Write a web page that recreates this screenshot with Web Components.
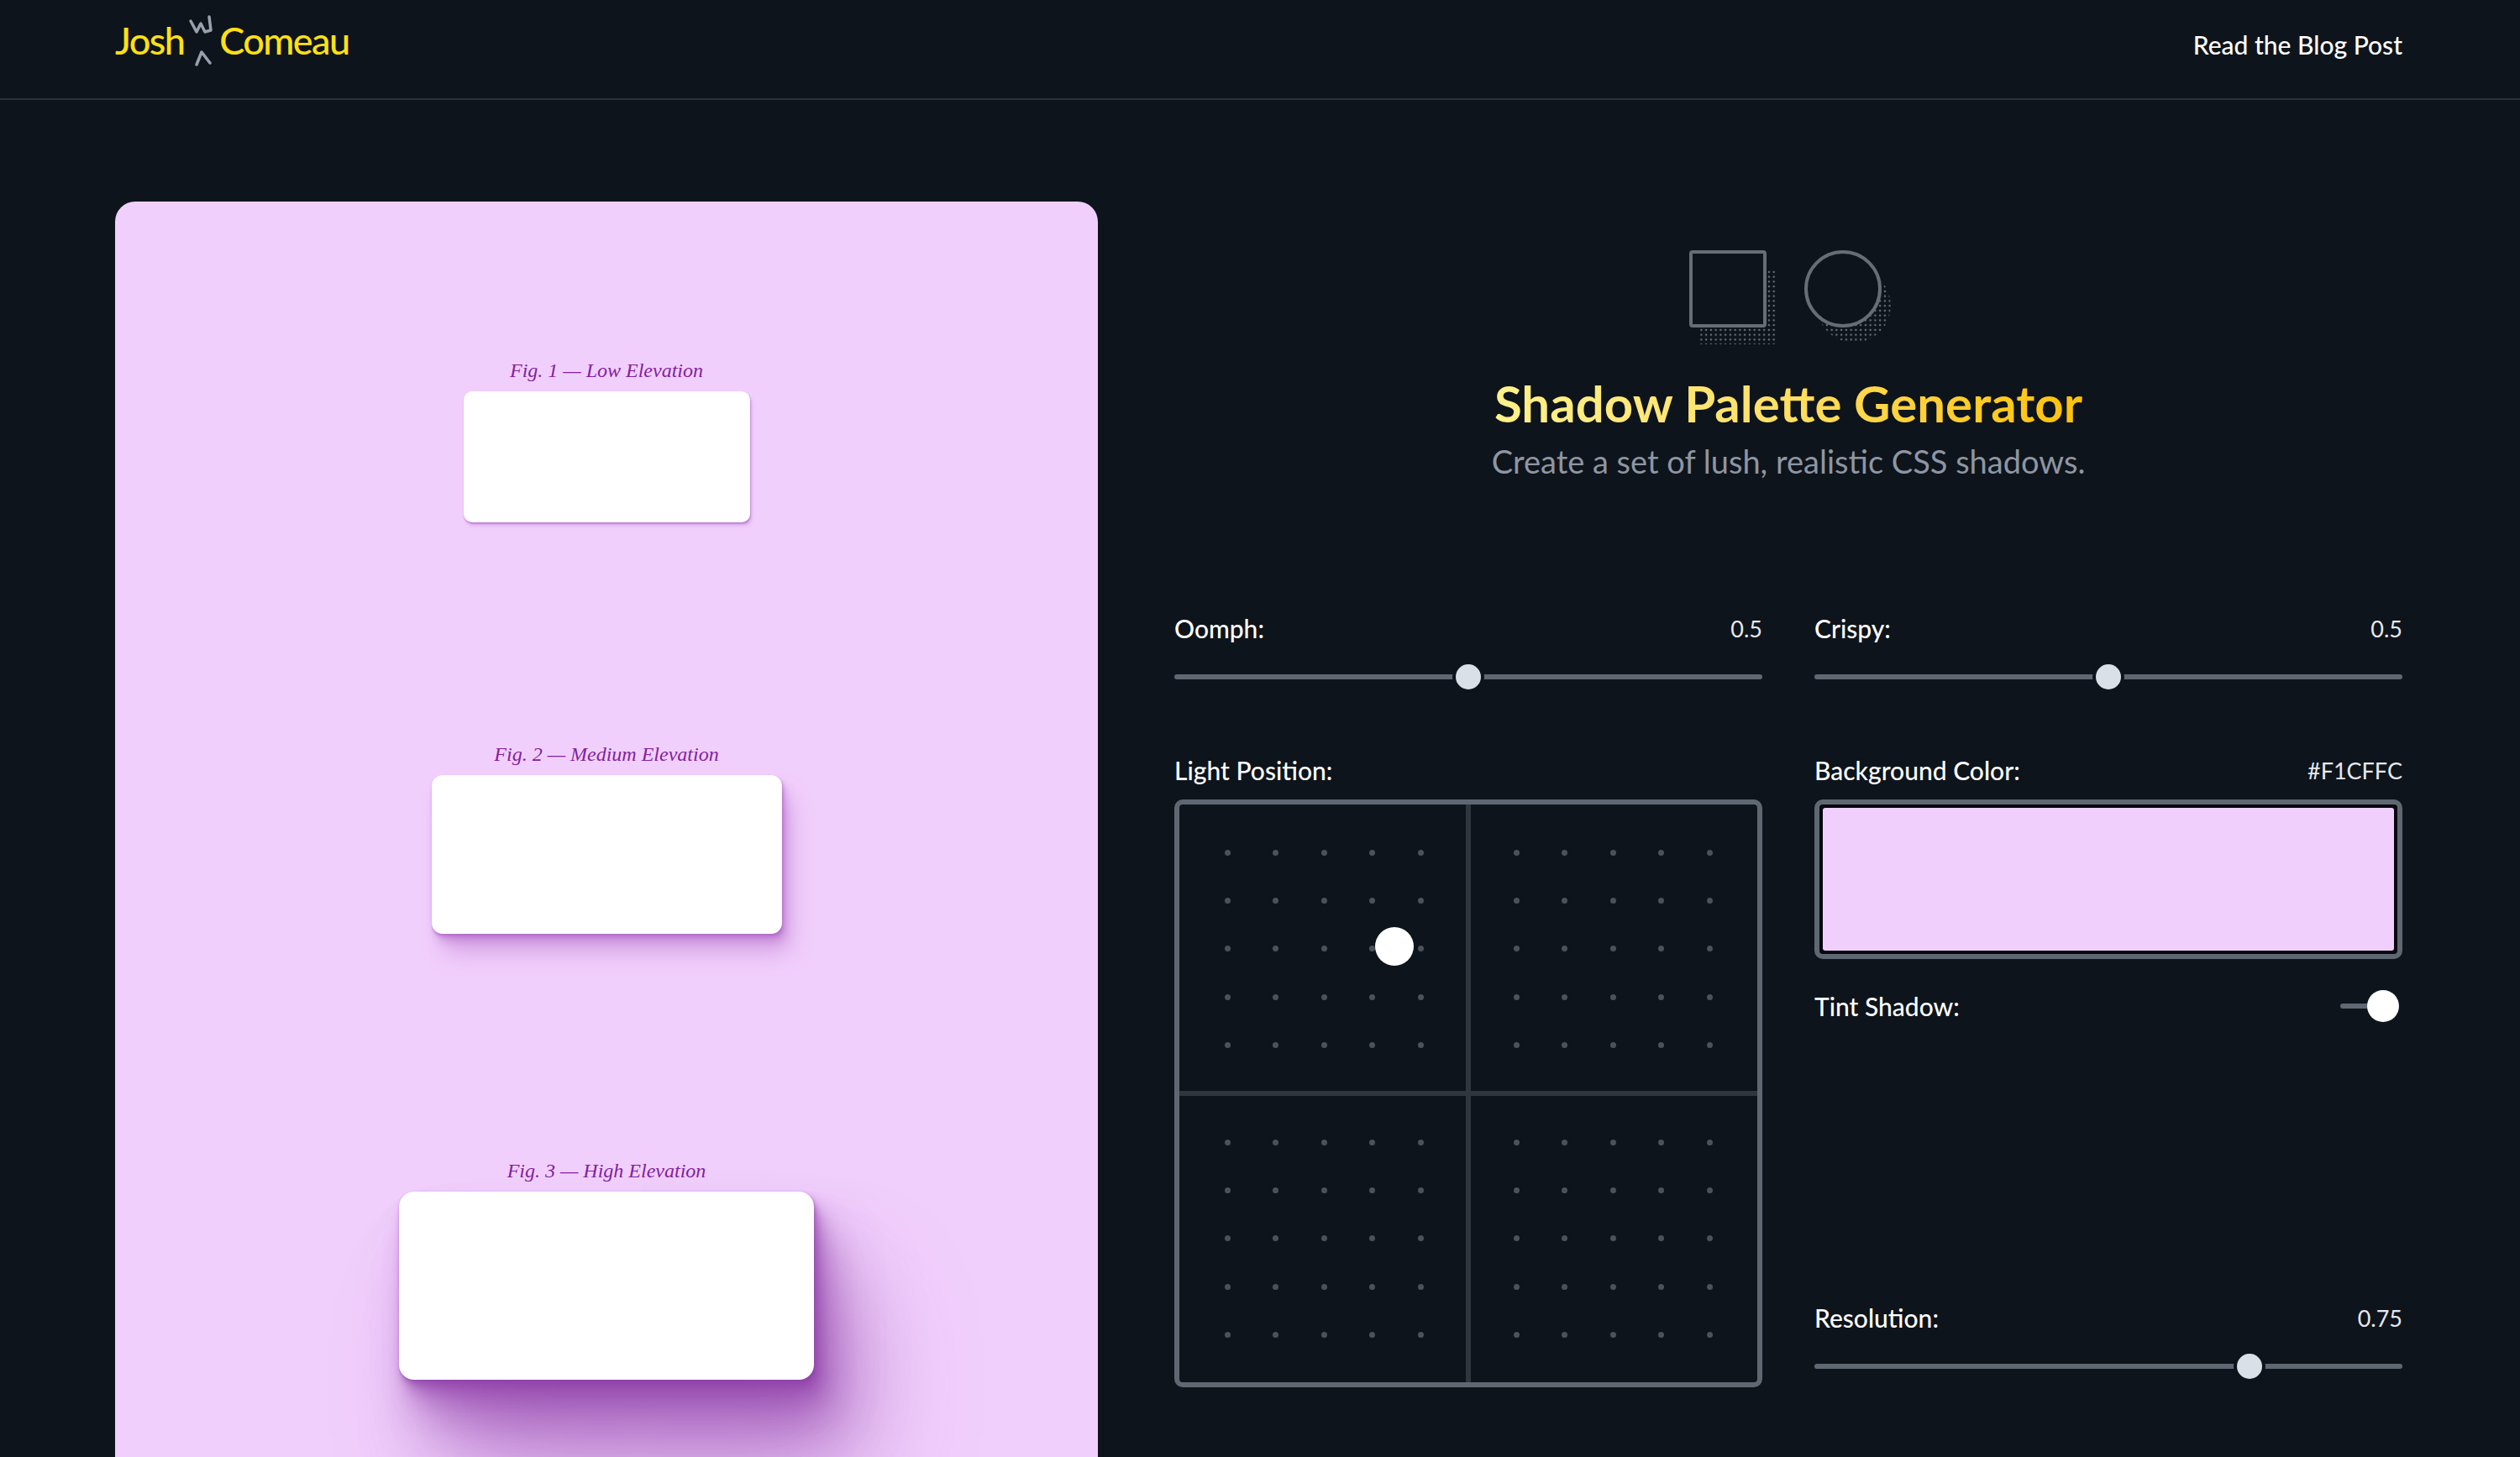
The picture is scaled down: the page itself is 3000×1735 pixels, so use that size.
<!DOCTYPE html>
<html lang="en">
<head>
<meta charset="utf-8">
<title>Shadow Palette Generator</title>
<style>
    html, body{
        margin: 0;
        height: 1735px;
        overflow: hidden;
        background: #0e141b;
        color: #fff;
        font-family: Lato, "Noto Sans", sans-serif;
    }
</style>
</head>
<body>
<site-header></site-header>
<app-main>
    <preview-panel slot="preview">
        <shadow-figure caption="Fig. 1 — Low Elevation" level="low"></shadow-figure>
        <shadow-figure caption="Fig. 2 — Medium Elevation" level="medium"></shadow-figure>
        <shadow-figure caption="Fig. 3 — High Elevation" level="high"></shadow-figure>
    </preview-panel>
    <app-hero slot="hero"></app-hero>
    <control-slider slot="oomph" label="Oomph:" value="0.5"></control-slider>
    <control-slider slot="crispy" label="Crispy:" value="0.5"></control-slider>
    <light-position slot="light"></light-position>
    <color-field slot="color"></color-field>
    <tint-toggle slot="tint"></tint-toggle>
    <control-slider slot="resolution" label="Resolution:" value="0.75"></control-slider>
</app-main>

<script>
class siteHeader extends HTMLElement{
    constructor(){
        super()
        this.attachShadow({mode: 'open'}).innerHTML = `
            <style>
                :host{
                    display: flex;
                    justify-content: space-between;
                    align-items: center;
                    box-sizing: border-box;
                    height: 119px;
                    padding: 0 140px 12px 137px;
                    border-bottom: 2px solid #2b3138;
                }
                .logo{
                    display: flex;
                    align-items: center;
                    color: #ffe014;
                    font-size: 45px;
                    font-weight: 500;
                    letter-spacing: -1.6px;
                    margin-top: -10px;
                }
                svg{
                    width: 37px;
                    height: 66px;
                    margin: 0 0 0 5px;
                    fill: none;
                    stroke: #9aa1ac;
                    stroke-width: 3.5;
                    stroke-linejoin: round;
                    stroke-linecap: round;
                }
                a{
                    color: #fff;
                    font-size: 30px;
                    font-weight: 500;
                    text-decoration: none;
                }
            </style>
            <div class="logo">
                <span>Josh</span>
                <svg viewBox="0 0 37 66">
                    <path d="M3 10 L10 23 L15 13 L20 23 L27 21 L25 5"/>
                    <path d="M10 62 L16 47 L26 60"/>
                </svg>
                <span>Comeau</span>
            </div>
            <a href="#">Read the Blog Post</a>
        `
    }
}

class appMain extends HTMLElement{
    constructor(){
        super()
        this.attachShadow({mode: 'open'}).innerHTML = `
            <style>
                :host{
                    display: grid;
                    grid-template-columns: 1170px 1462px;
                    column-gap: 91px;
                    padding: 121px 140px 0 137px;
                }
                .controls{
                    display: grid;
                    grid-template-columns: 700px 700px;
                    column-gap: 62px;
                    row-gap: 75px;
                }
                .side{
                    display: flex;
                    flex-direction: column;
                }
                ::slotted([slot="resolution"]){
                    margin-top: auto;
                    margin-bottom: 7px;
                }
            </style>
            <slot name="preview"></slot>
            <div>
                <slot name="hero"></slot>
                <div class="controls">
                    <slot name="oomph"></slot>
                    <slot name="crispy"></slot>
                    <slot name="light"></slot>
                    <div class="side">
                        <slot name="color"></slot>
                        <slot name="tint"></slot>
                        <slot name="resolution"></slot>
                    </div>
                </div>
            </div>
        `
    }
}

class previewPanel extends HTMLElement{
    constructor(){
        super()
        this.attachShadow({mode: 'open'}).innerHTML = `
            <style>
                :host{
                    display: flex;
                    flex-direction: column;
                    align-items: center;
                    box-sizing: border-box;
                    height: 1700px;
                    padding-top: 184px;
                    background: #f1cffc;
                    border-radius: 24px;
                }
            </style>
            <slot></slot>
        `
    }
}

const FIGURES = {
    low: {
        width: 341, height: 156, radius: 10, bottom: 259,
        shadow: `0.6px 1.2px 1.4px hsl(286deg 45% 55% / 0.34), 1px 2px 2.3px -1.2px hsl(286deg 45% 55% / 0.34), 2.4px 4.8px 5.4px -2.4px hsl(286deg 45% 55% / 0.34)`
    },
    medium: {
        width: 417, height: 189, radius: 13, bottom: 265,
        shadow: `0.6px 1.2px 1.4px hsl(286deg 45% 55% / 0.36), 2px 4px 4.5px -0.8px hsl(286deg 45% 55% / 0.36), 5px 10px 11.3px -1.6px hsl(286deg 45% 55% / 0.36), 12px 24px 27px -2.4px hsl(286deg 45% 55% / 0.36)`
    },
    high: {
        width: 494, height: 224, radius: 18, bottom: 0,
        shadow: `0.9px 1.8px 2.2px hsl(286deg 45% 45% / 0.34), 2.6px 5.2px 5.9px -0.7px hsl(286deg 45% 45% / 0.34), 5.1px 10.2px 11.6px -1.3px hsl(286deg 45% 45% / 0.34), 9.1px 18.2px 20.5px -2px hsl(286deg 45% 45% / 0.34), 15.5px 31px 35px -2.6px hsl(286deg 45% 45% / 0.34), 25.6px 51px 58px -3.4px hsl(286deg 45% 45% / 0.34), 40px 80px 90px -4px hsl(286deg 45% 45% / 0.34), 59px 119px 134px -4.7px hsl(286deg 45% 45% / 0.34)`
    }
}

class shadowFigure extends HTMLElement{
    constructor(){
        super()
        let fig = FIGURES[this.getAttribute('level')]
        this.attachShadow({mode: 'open'}).innerHTML = `
            <style>
                :host{
                    display: flex;
                    flex-direction: column;
                    align-items: center;
                    margin-bottom: ${fig.bottom}px;
                }
                p{
                    margin: 0 0 8px;
                    height: 34px;
                    line-height: 34px;
                    font-family: "Liberation Serif", serif;
                    font-style: italic;
                    font-size: 24px;
                    color: #82219e;
                }
                .box{
                    width: ${fig.width}px;
                    height: ${fig.height}px;
                    border-radius: ${fig.radius}px;
                    background: #fff;
                    box-shadow: ${fig.shadow};
                }
            </style>
            <p>${this.getAttribute('caption')}</p>
            <div class="box"></div>
        `
    }
}

class appHero extends HTMLElement{
    constructor(){
        super()
        this.attachShadow({mode: 'open'}).innerHTML = `
            <style>
                :host{
                    display: flex;
                    flex-direction: column;
                    align-items: center;
                    box-sizing: border-box;
                    height: 490px;
                    padding-top: 58px;
                }
                svg{
                    width: 240px;
                    height: 114px;
                    display: block;
                    margin-right: -4px;
                }
                h1{
                    margin: 28px 0 0;
                    font-size: 60px;
                    line-height: 80px;
                    font-weight: 700;
                    background: linear-gradient(90deg, #fff08a 0%, #ffe16a 45%, #ffc107 100%);
                    -webkit-background-clip: text;
                    background-clip: text;
                    color: transparent;
                }
                p{
                    margin: 2px 0 0;
                    font-size: 38px;
                    line-height: 54px;
                    color: #8e96a3;
                }
            </style>
            <svg viewBox="0 0 240 114">
                <defs>
                    <pattern id="dots" width="5.75" height="5.75" patternUnits="userSpaceOnUse">
                        <circle cx="2.9" cy="2.9" r="1.25" fill="#6a717a"/>
                    </pattern>
                </defs>
                <rect x="13" y="22" width="90" height="90" fill="url(#dots)"/>
                <rect x="2" y="2" width="88" height="88" rx="2" fill="#0e141b" stroke="#666d76" stroke-width="4"/>
                <circle cx="196" cy="66" r="44" fill="url(#dots)"/>
                <circle cx="183" cy="46" r="44" fill="#0e141b" stroke="#666d76" stroke-width="4"/>
            </svg>
            <h1>Shadow Palette Generator</h1>
            <p>Create a set of lush, realistic CSS shadows.</p>
        `
    }
}

class controlSlider extends HTMLElement{
    constructor(){
        super()
        let value = this.getAttribute('value')
        this.attachShadow({mode: 'open'}).innerHTML = `
            <style>
                :host{
                    display: block;
                }
                .top{
                    display: flex;
                    justify-content: space-between;
                    align-items: center;
                    height: 36px;
                    margin-bottom: 22px;
                }
                label{
                    font-size: 30px;
                    font-weight: 500;
                }
                span{
                    font-size: 27px;
                    color: #e6e9ee;
                }
                .rail{
                    position: relative;
                    height: 36px;
                    display: flex;
                    align-items: center;
                }
                .track{
                    width: 100%;
                    height: 6px;
                    border-radius: 3px;
                    background: #5f6872;
                }
                .thumb{
                    position: absolute;
                    top: 3px;
                    left: calc(${value} * (100% - 30px));
                    width: 30px;
                    height: 30px;
                    border-radius: 50%;
                    background: #d9e0e7;
                    box-shadow: 0 0 0 4px #0e141b;
                }
            </style>
            <div class="top">
                <label>${this.getAttribute('label')}</label>
                <span>${value}</span>
            </div>
            <div class="rail">
                <div class="track"></div>
                <div class="thumb"></div>
            </div>
        `
    }
}

class lightPosition extends HTMLElement{
    constructor(){
        super()
        let dots = '<i></i>'.repeat(25)
        this.attachShadow({mode: 'open'}).innerHTML = `
            <style>
                :host{
                    display: block;
                }
                label{
                    display: block;
                    height: 36px;
                    line-height: 36px;
                    font-size: 30px;
                    font-weight: 500;
                    margin-bottom: 17px;
                }
                .box{
                    position: relative;
                    box-sizing: border-box;
                    width: 700px;
                    height: 700px;
                    border: 6px solid #5f6872;
                    border-radius: 10px;
                    display: grid;
                    grid-template-columns: 341px 6px 341px;
                    grid-template-rows: 341px 6px 341px;
                }
                .quad{
                    box-sizing: border-box;
                    display: grid;
                    grid-template-columns: repeat(5, 57.5px);
                    grid-auto-rows: 57.4px;
                    justify-content: center;
                    align-content: center;
                    justify-items: center;
                    align-items: center;
                }
                .q1{ padding: 3px 0 0 3px; }
                .q2{ padding: 3px 3px 0 0; }
                .q3{ padding: 0 0 1px 3px; }
                .q4{ padding: 0 3px 1px 0; }
                i{
                    width: 7px;
                    height: 7px;
                    border-radius: 50%;
                    background: #4b5259;
                }
                .v, .h, .c{
                    background: #2f363d;
                }
                .light{
                    position: absolute;
                    left: 233px;
                    top: 146px;
                    width: 46px;
                    height: 46px;
                    border-radius: 50%;
                    background: #fff;
                }
            </style>
            <label>Light Position:</label>
            <div class="box">
                <div class="quad q1">${dots}</div>
                <div class="v"></div>
                <div class="quad q2">${dots}</div>
                <div class="h"></div>
                <div class="c"></div>
                <div class="h"></div>
                <div class="quad q3">${dots}</div>
                <div class="v"></div>
                <div class="quad q4">${dots}</div>
                <div class="light"></div>
            </div>
        `
    }
}

class colorField extends HTMLElement{
    constructor(){
        super()
        this.attachShadow({mode: 'open'}).innerHTML = `
            <style>
                :host{
                    display: block;
                }
                .top{
                    display: flex;
                    justify-content: space-between;
                    align-items: center;
                    height: 36px;
                    margin-bottom: 17px;
                }
                label{
                    font-size: 30px;
                    font-weight: 500;
                }
                span{
                    font-size: 27px;
                    color: #e6e9ee;
                }
                .well{
                    box-sizing: border-box;
                    height: 190px;
                    padding: 4px;
                    border: 6px solid #5f6872;
                    border-radius: 10px;
                    background: #08080f;
                }
                .well div{
                    height: 100%;
                    border-radius: 3px;
                    background: #f1cffc;
                }
            </style>
            <div class="top">
                <label>Background Color:</label>
                <span>#F1CFFC</span>
            </div>
            <div class="well"><div></div></div>
        `
    }
}

class tintToggle extends HTMLElement{
    constructor(){
        super()
        this.attachShadow({mode: 'open'}).innerHTML = `
            <style>
                :host{
                    display: flex;
                    justify-content: space-between;
                    align-items: center;
                    height: 38px;
                    margin-top: 37px;
                }
                label{
                    font-size: 30px;
                    font-weight: 500;
                }
                .switch{
                    position: relative;
                    width: 74px;
                    height: 38px;
                    display: flex;
                    align-items: center;
                }
                .track{
                    width: 40px;
                    height: 6px;
                    border-radius: 3px;
                    background: #5f6872;
                }
                .knob{
                    position: absolute;
                    right: 4px;
                    top: 0;
                    width: 38px;
                    height: 38px;
                    border-radius: 50%;
                    background: #fff;
                }
            </style>
            <label>Tint Shadow:</label>
            <div class="switch">
                <div class="track"></div>
                <div class="knob"></div>
            </div>
        `
    }
}

customElements.define('site-header', siteHeader)
customElements.define('app-main', appMain)
customElements.define('preview-panel', previewPanel)
customElements.define('shadow-figure', shadowFigure)
customElements.define('app-hero', appHero)
customElements.define('control-slider', controlSlider)
customElements.define('light-position', lightPosition)
customElements.define('color-field', colorField)
customElements.define('tint-toggle', tintToggle)
</script>
</body>
</html>
